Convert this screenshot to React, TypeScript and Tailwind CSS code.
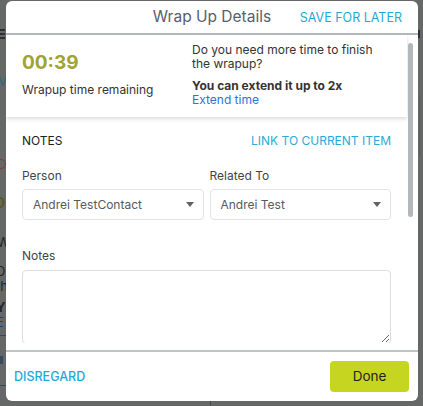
import React from "react";

function Caret() {
  return (
    <svg width="8" height="5" viewBox="0 0 8 5" className="shrink-0">
      <path d="M0 0 H8 L4 5 Z" fill="#5f6368" />
    </svg>
  );
}

function Select({ value }: { value: string }) {
  return (
    <div className="flex-1 h-[31px] border border-[#e1e3e5] rounded-[4px] flex items-center justify-between pl-[10px] pr-[9px] text-[12px] text-[#555a5f]">
      <span>{value}</span>
      <Caret />
    </div>
  );
}

export default function App() {
  return (
    <div className="relative w-[423px] h-[406px] overflow-hidden bg-[#666767] font-['Inter',sans-serif]">
      {/* dimmed page behind the modal */}
      <div className="absolute left-0 top-[29px] w-[5px] flex flex-col gap-[2px]">
        <div className="h-[2px] bg-[#2e2f30]" />
        <div className="h-[2px] bg-[#2e2f30]" />
        <div className="h-[2px] bg-[#2e2f30]" />
      </div>
      <div className="absolute left-[-2px] top-[72px] text-[13px] text-[#2f6a78]">V</div>
      <div className="absolute left-[-4px] top-[159px] w-[10px] h-[10px] rounded-full border border-[#8a3a3a]" />
      <div className="absolute left-[-5px] top-[192px] text-[15px] font-bold text-[#565a1c]">0</div>
      <div className="absolute left-[-3px] top-[233px] text-[13px] text-[#252525]">W</div>
      <div className="absolute left-[-4px] top-[264px] text-[13px] leading-[15px] text-[#252525]">
        D<br />th
      </div>
      <div className="absolute left-[-4px] top-[300px] text-[13px] leading-[15px] text-[#252525]">
        <b>Y</b>
        <br />
        <span className="text-[#1f3f80]">E</span>
      </div>
      <div className="absolute left-0 top-[335px] w-[6px] h-[1px] bg-[#2a4a7a]" />
      <div className="absolute left-0 top-[356px] w-[3px] h-[8px] bg-[#34495a]" />
      <div className="absolute left-0 top-[385px] w-[6px] h-[1px] bg-[#2a4a7a]" />
      <div className="absolute left-[418px] top-[30px] w-[4px] h-[8px] border-l-2 border-[#2e2f30]" />
      <div className="absolute left-[419px] top-[95px] w-[1px] h-[60px] bg-[#5a5b5c]" />
      <div className="absolute left-[210px] top-[401px] w-[1px] h-[5px] bg-[#4a4b4c]" />

      {/* modal */}
      <div className="absolute left-[6px] top-[1px] w-[412px] h-[400px] bg-white rounded-[6px] flex flex-col overflow-hidden">
        <div className="relative h-[34px] shrink-0 flex items-center justify-center border-b-2 border-[#b3b7bb]">
          <span className="text-[15.5px] text-[#56606a]">Wrap Up Details</span>
          <span className="absolute right-[16px] top-[8px] text-[12.5px] text-[#1fa9d6]">SAVE FOR LATER</span>
        </div>

        <div className="flex h-[308px] shrink-0 overflow-hidden">
          <div className="w-[401px] shrink-0 flex flex-col">
            <div className="h-[82px] shrink-0 flex px-[16px] shadow-[0_2px_4px_rgba(0,0,0,0.14)]">
              <div className="w-[170px] shrink-0 pt-[16px]">
                <div className="text-[19px] leading-[24px] font-bold text-[#a1a333]">00:39</div>
                <div className="mt-[7px] text-[12px] leading-[16px] text-[#333]">Wrapup time remaining</div>
              </div>
              <div className="pt-[8px] text-[12px] leading-[14px] text-[#333]">
                <div>Do you need more time to finish</div>
                <div>the wrapup?</div>
                <div className="mt-[8px] font-bold text-[#333]">You can extend it up to 2x</div>
                <div className="text-[#2b73d4]">Extend time</div>
              </div>
            </div>

            <div className="px-[16px] flex flex-col">
              <div className="mt-[16px] flex justify-between items-center text-[12px] leading-[16px]">
                <span className="text-[#222]">NOTES</span>
                <span className="text-[#2aaad6]">LINK TO CURRENT ITEM</span>
              </div>
              <div className="mt-[19px] flex gap-[6px]">
                <div className="flex-1 flex flex-col">
                  <span className="text-[12px] leading-[16px] text-[#444]">Person</span>
                  <div className="mt-[5px] flex">
                    <Select value="Andrei TestContact" />
                  </div>
                </div>
                <div className="flex-1 flex flex-col">
                  <span className="text-[12px] leading-[16px] text-[#444]">Related To</span>
                  <div className="mt-[5px] flex">
                    <Select value="Andrei Test" />
                  </div>
                </div>
              </div>
              <span className="mt-[28px] text-[12px] leading-[16px] text-[#444]">Notes</span>
              <textarea className="mt-[6px] h-[74px] w-full shrink-0 border border-[#dcdee0] rounded-[4px] outline-none" />
            </div>
          </div>
          <div className="w-[11px] shrink-0 pt-[8px] pl-[1px]">
            <div className="w-[5px] h-[174px] rounded-full bg-[#b4b7ba]" />
          </div>
        </div>

        <div className="h-[7px] shrink-0" />
        <div className="flex-1 border-t-2 border-[#c0c4c8] flex items-center justify-between pl-[8px] pr-[9px]">
          <span className="mt-[2px] text-[12.5px] font-medium text-[#1fa9d6]">DISREGARD</span>
          <button className="w-[79px] h-[31px] rounded-[4px] bg-[#c6d520] text-[13.5px] text-[#222]">Done</button>
        </div>
      </div>
    </div>
  );
}
